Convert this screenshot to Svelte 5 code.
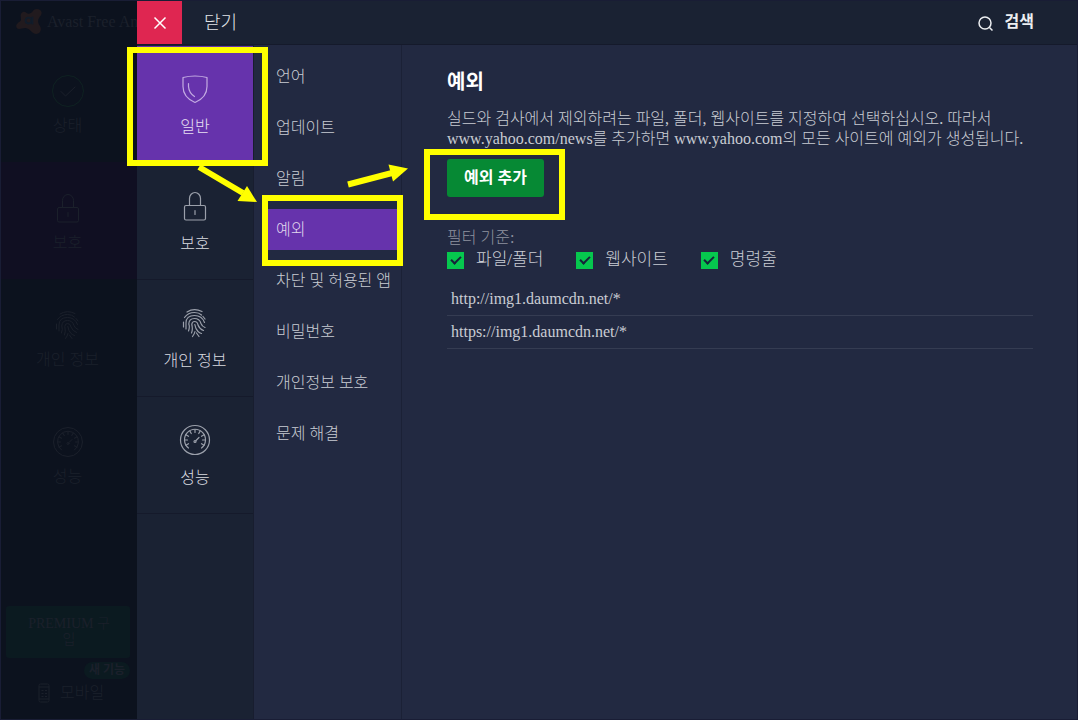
<script>
  const sections = [
    { icon: 'shield', label: '일반', active: true },
    { icon: 'lock', label: '보호' },
    { icon: 'finger', label: '개인 정보' },
    { icon: 'gauge', label: '성능' }
  ];
  const appNav = [
    { icon: 'check', label: '상태' },
    { icon: 'lock', label: '보호', active: true },
    { icon: 'finger', label: '개인 정보' },
    { icon: 'gauge', label: '성능' }
  ];
  const pages = ['언어', '업데이트', '알림', '예외', '차단 및 허용된 앱', '비밀번호', '개인정보 보호', '문제 해결'];
  let page = $state('예외');
  let filters = $state([
    { id: 'files', label: '파일/폴더', on: true },
    { id: 'sites', label: '웹사이트', on: true },
    { id: 'commands', label: '명령줄', on: true }
  ]);
  const exceptions = ['http://img1.daumcdn.net/*', 'https://img1.daumcdn.net/*'];
  const ticks = [-120, -90, -60, -30, 0, 30, 60, 90, 120];
</script>

{#snippet icon(name)}
  <svg class="icon" viewBox="0 0 32 32" aria-hidden="true">
    {#if name === 'shield'}
      <path d="M4 4.500Q10 3 16 3T28 4.500V13.500C28 21.500 23 26.500 16 29.500C9 26.500 4 21.500 4 13.500Z" />
      <path d="M9.500 10.500V13.500Q10 20 15.500 23.500" />
    {:else if name === 'lock'}
      <rect x="5.500" y="15.500" width="21" height="14.500" rx="1.500" />
      <path d="M10.500 15.500V8.500A5.500 6 0 0 1 21.500 8.500V15.500M16 20.500v4" />
    {:else if name === 'finger'}
      <path d="M8 5Q15 .500 23 4.500M5.500 10.500Q9 5.500 15.500 5.500Q20 5.500 22.500 8M24 9.500L26 12M4.500 15V20M7 22V16Q7 8.500 15.500 8.500Q23 8.500 25.500 15.500M9.500 24Q11 20 9.800 17Q10 11.500 15.500 11.500Q20.500 11.500 22 16.500Q23 19.500 26 20.500M12.500 26Q14 22.500 12.800 17.500Q13 14.500 15.500 14.500Q18.500 14.500 19 18Q20.500 22 24.500 23.500M13.500 29.500Q15.500 27 16 24.500M15.800 17.500Q16.500 22 19 24.500Q20.500 26 22.500 26.500M17.500 26L20 29.500" />
    {:else if name === 'gauge'}
      <circle cx="16" cy="16" r="14.500" />
      <path d="M9.500 24A10.500 10.500 0 1 1 22.500 24M17 16.500L20 13.500" />
      <circle cx="16" cy="17.500" r="1" />
      {#each ticks as angle}
        <path d="M16 5.500V8.500" transform="rotate({angle} 16 16)" />
      {/each}
    {:else}
      <circle class="ring" cx="16" cy="16" r="15.500" />
      <path d="M9 16.500L13.500 21L23 12" />
    {/if}
  </svg>
{/snippet}

<div class="window">
  <aside class="app">
    <header class="brand">
      <svg viewBox="0 0 28 28" aria-hidden="true">
        <path class="splat" d="M17 4C18 1 22 0 25 2C28 5 26 8 24 10C22 13 23 16 25 19C27 23 25 27 21 27C17 27 15 22 11 21C7 20 4 23 1 21C-1 18 1 16 4 14C7 12 3 8 6 5C9 2 11 6 13 6C15 6 16 5 17 4Z" />
        <circle class="hole" cx="13" cy="13" r="3" />
        <path class="hole" d="M17 9v8" />
      </svg>
      <span>Avast Free Antivirus</span>
    </header>
    <nav class="tiles">
      {#each appNav as item}
        <button class="tile" class:selected={item.active}>
          {@render icon(item.icon)}
          <span>{item.label}</span>
        </button>
      {/each}
    </nav>
    <footer class="promo">
      <button class="premium">PREMIUM 구입</button>
      <span class="badge">새 기능</span>
      <a class="mobile" href="#mobile">
        <svg viewBox="0 0 12 20" aria-hidden="true">
          <rect x="1" y="1" width="10" height="18" rx="1.500" />
          <path d="M1 4H11M1 16H11M3.500 7.500h2M7 7.500h2M3.500 10.500h2M7 10.500h2M3.500 13.500h2M7 13.500h2" />
        </svg>
        모바일
      </a>
    </footer>
  </aside>

  <div class="drawer">
    <header class="bar">
      <button class="close" aria-labelledby="close-label">
        <svg viewBox="0 0 14 14" aria-hidden="true"><path d="M1.500 1.500L12.500 12.500M12.500 1.500L1.500 12.500" /></svg>
      </button>
      <span id="close-label" class="close-label">닫기</span>
      <button class="search">
        <svg viewBox="0 0 16 16" aria-hidden="true"><circle cx="7" cy="7" r="6" /><path d="M11.500 11.500L14.500 14.500" /></svg>
        <span>검색</span>
      </button>
    </header>

    <div class="body">
      <nav class="tiles rail">
        {#each sections as item}
          <button class="tile" class:selected={item.active}>
            {@render icon(item.icon)}
            <span>{item.label}</span>
          </button>
        {/each}
      </nav>

      <nav class="pages">
        {#each pages as name}
          <button class:current={page === name} onclick={() => (page = name)}>{name}</button>
        {/each}
      </nav>

      <main>
        <h1>예외</h1>
        <p>
          실드와 검사에서 제외하려는 파일, 폴더, 웹사이트를 지정하여 선택하십시오. 따라서<br />
          www.yahoo.com/news를 추가하면 www.yahoo.com의 모든 사이트에 예외가 생성됩니다.
        </p>
        <button class="add">예외 추가</button>
        <fieldset>
          <legend>필터 기준:</legend>
          <div class="filters">
            {#each filters as filter}
              <label for={filter.id}>
                <input type="checkbox" id={filter.id} bind:checked={filter.on} />
                {filter.label}
              </label>
            {/each}
          </div>
        </fieldset>
        <table>
          <tbody>
            {#each exceptions as url}
              <tr><td>{url}</td></tr>
            {/each}
          </tbody>
        </table>
      </main>
    </div>
  </div>

  <svg class="marks" width="440" height="225" aria-hidden="true">
    <path class="shaft" d="M199 167L243 193" />
    <path class="head" d="M257 202L237.500 201L247 186Z" />
    <path class="shaft" d="M348 184.500L392 173" />
    <path class="head" d="M408 168.500L393 181.500L388.500 164.500Z" />
  </svg>
  <div class="mark section-mark"></div>
  <div class="mark page-mark"></div>
  <div class="mark add-mark"></div>
</div>

<style>
  :global(body) {
    margin: 0;
    background: #222941;
  }
  .window {
    position: relative;
    display: flex;
    box-sizing: border-box;
    min-height: 100vh;
    border: 1px solid #191d35;
    background: #222941;
    color: #c9ccd3;
    font: 300 16px/20px "Liberation Serif", "Noto Sans CJK KR", serif;
  }
  button {
    border: 0;
    padding: 0;
    background: none;
    color: inherit;
    font: inherit;
    cursor: pointer;
  }
  svg {
    fill: none;
    stroke: currentColor;
  }
  .app {
    display: flex;
    flex: none;
    flex-direction: column;
    width: 136px;
    overflow: hidden;
    background: #0c121e;
    color: #1b202b;
  }
  .brand {
    display: flex;
    align-items: center;
    gap: 4px;
    height: 41px;
    padding-left: 15px;
    white-space: nowrap;
  }
  .brand svg {
    flex: none;
    width: 27px;
    height: 27px;
  }
  .splat {
    fill: #211a1e;
    stroke: none;
  }
  .hole {
    stroke: #111c2a;
    stroke-width: 2;
  }
  .tiles {
    display: flex;
    flex-direction: column;
  }
  .tile {
    display: flex;
    flex-direction: column;
    align-items: center;
    gap: 12px;
    box-sizing: border-box;
    height: 117px;
    padding-top: 27px;
  }
  .app .tile {
    gap: 9px;
    padding: 30px 3px 0 0;
  }
  .app .tiles {
    padding-top: 3px;
  }
  .app .selected {
    background: #100f22;
  }
  .app .ring {
    stroke: #0f2222;
  }
  .icon {
    width: 32px;
    height: 32px;
    stroke-linecap: round;
    stroke-linejoin: round;
  }
  .promo {
    display: flex;
    flex-direction: column;
    margin-top: auto;
    padding: 0 7px 16px 5px;
  }
  .premium {
    height: 52px;
    padding: 0 16px 0 18px;
    border-radius: 3px;
    background: #0b1a20;
    font-size: 14px;
    line-height: 16px;
    word-break: break-all;
  }
  .badge {
    align-self: flex-end;
    margin-top: 4px;
    padding: 0 5px;
    border-radius: 9px;
    background: #0b1a20;
    font-size: 12px;
    font-weight: 700;
    line-height: 17px;
  }
  .mobile {
    display: flex;
    align-items: center;
    gap: 10px;
    margin: 4px 0 0 32px;
    color: inherit;
    text-decoration: none;
  }
  .mobile svg {
    width: 12px;
    height: 20px;
  }
  .drawer {
    display: flex;
    flex: 1;
    flex-direction: column;
    min-width: 0;
  }
  .bar {
    display: flex;
    align-items: center;
    height: 43px;
    border-bottom: 1px solid #151a2b;
    background: #1a2233;
  }
  .close {
    display: grid;
    place-items: center;
    width: 45px;
    height: 43px;
    background: #df2651;
    color: #fff;
  }
  .close svg {
    width: 14px;
    height: 14px;
    stroke-width: 1.500;
  }
  .close-label {
    margin-left: 22px;
    color: #e2e4e8;
    font-size: 18px;
  }
  .search {
    display: flex;
    align-items: center;
    gap: 11px;
    margin: 0 43px 2px auto;
    color: #eceef1;
    font-weight: 700;
  }
  .search svg {
    width: 16px;
    height: 16px;
    margin-top: 4px;
    stroke-width: 1.500;
  }
  .body {
    display: flex;
    flex: 1;
  }
  .rail {
    flex: none;
    width: 116px;
    padding-top: 1px;
    border-right: 1px solid #181d2f;
    background: #1a2233;
  }
  .rail .tile {
    border-bottom: 1px solid #151a2b;
    color: #d9dbe0;
  }
  .rail .icon {
    color: #9ba0ab;
    stroke-width: 1.200;
  }
  .rail .selected {
    background: #6633ac;
    color: #e8e0f3;
  }
  .rail .selected .icon {
    color: #c3abe2;
  }
  .pages {
    display: flex;
    flex: none;
    flex-direction: column;
    gap: 10px;
    box-sizing: border-box;
    width: 148px;
    padding: 11px 0 0 8px;
    border-right: 1px solid #1b2136;
  }
  .pages button {
    height: 41px;
    padding-left: 14px;
    text-align: left;
    white-space: nowrap;
  }
  .pages .current {
    background: #6633ac;
    color: #e0d6ee;
  }
  main {
    flex: 1;
    min-width: 0;
    padding: 25px 44px 24px 45px;
  }
  h1 {
    margin: 0;
    color: #fff;
    font-size: 20px;
    font-weight: 700;
    line-height: 24px;
  }
  p {
    margin: 15px 0 10px;
  }
  .add {
    height: 38px;
    padding: 0 17px;
    border-radius: 3px;
    background: #068934;
    color: #fff;
    font-weight: 700;
  }
  fieldset {
    margin: 31px 0 0;
    border: 0;
    padding: 0;
  }
  legend {
    padding: 0;
    color: #8e929f;
  }
  .filters {
    display: flex;
    gap: 33px;
    font-size: 17px;
    line-height: 24px;
  }
  .filters label {
    display: flex;
    align-items: center;
    gap: 12px;
  }
  .filters input {
    display: grid;
    place-items: center;
    width: 17px;
    height: 17px;
    margin: 0;
    background: #06c74e;
    appearance: none;
  }
  .filters input:checked::before {
    width: 8px;
    height: 4px;
    border: solid #17233a;
    border-width: 0 0 2px 2px;
    content: "";
    transform: translateY(-1px) rotate(-45deg);
  }
  table {
    width: 100%;
    margin-top: 11px;
    border-collapse: collapse;
  }
  td {
    height: 32px;
    padding: 0 4px;
    border-bottom: 1px solid #353c52;
  }
  .marks,
  .mark {
    position: absolute;
    pointer-events: none;
  }
  .marks {
    top: -1px;
    left: -1px;
  }
  .shaft {
    stroke: #ff0;
    stroke-width: 6;
  }
  .head {
    fill: #ff0;
    stroke: none;
  }
  .mark {
    box-sizing: border-box;
    width: 141px;
    height: 71px;
    border: 6px solid #ff0;
  }
  .section-mark {
    top: 46px;
    left: 126px;
    height: 119px;
  }
  .page-mark {
    top: 194px;
    left: 261px;
  }
  .add-mark {
    top: 148px;
    left: 423px;
  }
</style>
